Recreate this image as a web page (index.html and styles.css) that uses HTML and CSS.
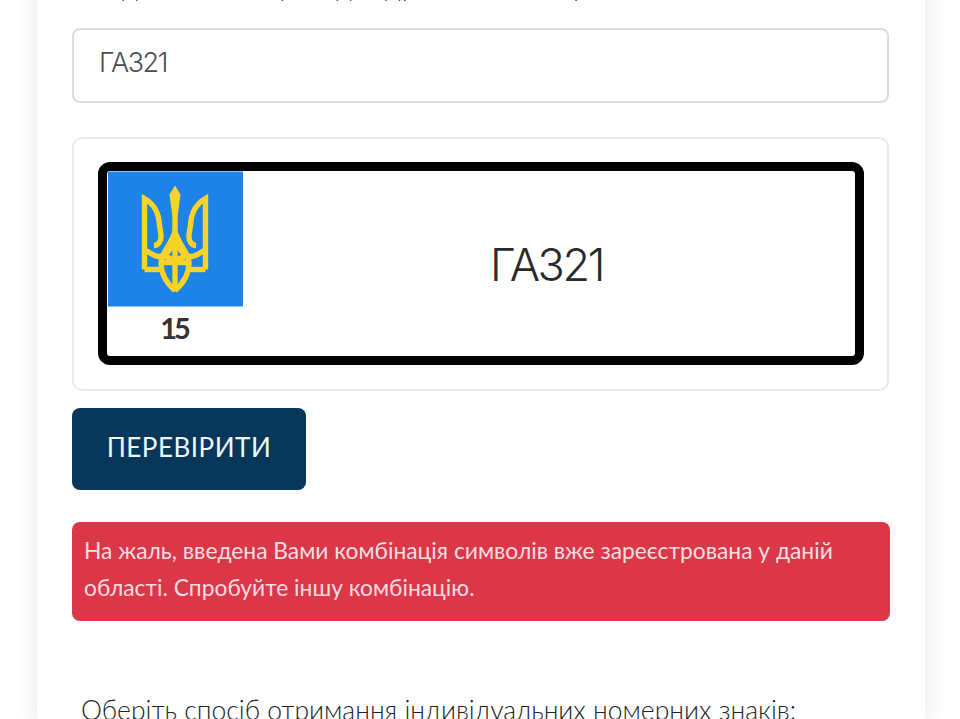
FILE: index.html
```html
<!DOCTYPE html>
<html lang="uk">
<head>
<meta charset="utf-8">
<title>Перевірка номерного знака</title>
<link rel="stylesheet" href="styles.css">
</head>
<body>
<main class="card">
  <p class="intro">Введіть комбінацію індивідуального номерного знака</p>
  <div class="input">ГА321</div>
  <section class="preview">
    <div class="plate">
      <div class="region">
        <svg class="flag" viewBox="0 0 135 135" aria-hidden="true">
          <rect width="135" height="135" fill="#1d83e6"/>
          <g class="tryzub">
            <path class="solid" d="M67 14L72.5 23L70 42L67 52L64 42L61.5 23Z"/>
            <path d="M67 40V120"/>
            <g>
              <path d="M36.5 98V27C47 33 51 42 51.5 54L53 63C53.5 70 50 74 46 74"/>
              <path d="M36.5 79C42 80 45 85 51 85C60 85 65 74 67 60"/>
              <path d="M36.5 98H54"/>
              <path d="M67 60C64 72 53 82 53 91C53 105 60 113 67 119"/>
              <path d="M54 91H67"/>
              <path d="M55 85C60 85 64 87 67 92"/>
            </g>
            <g transform="translate(134 0) scale(-1 1)">
              <path d="M36.5 98V27C47 33 51 42 51.5 54L53 63C53.5 70 50 74 46 74"/>
              <path d="M36.5 79C42 80 45 85 51 85C60 85 65 74 67 60"/>
              <path d="M36.5 98H54"/>
              <path d="M67 60C64 72 53 82 53 91C53 105 60 113 67 119"/>
              <path d="M54 91H67"/>
              <path d="M55 85C60 85 64 87 67 92"/>
            </g>
          </g>
        </svg>
        <span class="code">15</span>
      </div>
      <div class="number">ГА321</div>
    </div>
  </section>
  <button class="check" type="button">ПЕРЕВІРИТИ</button>
  <div class="alert">На жаль, введена Вами комбінація символів вже зареєстрована у даній області. Спробуйте іншу комбінацію.</div>
  <p class="choose">Оберіть спосіб отримання індивідуальних номерних знаків:</p>
</main>
</body>
</html>
```
FILE: styles.css
```css
html, body {
  margin: 0;
  height: 719px;
  overflow: hidden;
  background: #fff;
}
body {
  font-family: Lato, "Open Sans", "Noto Sans", sans-serif;
  color: #212529;
}
.card {
  width: 888px;
  height: 760px;
  margin: -32px 0 0 37px;
  padding: 0 35px;
  box-sizing: border-box;
  background: #fff;
  box-shadow: 0 0 24px rgba(0, 0, 0, .1);
}
.intro {
  margin: 0 0 0 8px;
  height: 60px;
  font-size: 26px;
  font-weight: 300;
  line-height: 36px;
  white-space: nowrap;
}
.input {
  box-sizing: border-box;
  width: 817px;
  height: 75px;
  padding: 0 25px;
  border: 2px solid #dadcde;
  border-radius: 8px;
  font-family: Inter, Roboto, sans-serif;
  font-size: 27px;
  font-weight: 300;
  letter-spacing: -1.4px;
  line-height: 65px;
  color: #495057;
}
.preview {
  box-sizing: border-box;
  width: 817px;
  height: 254px;
  margin-top: 34px;
  padding: 23px 24px;
  border: 2px solid #e9e9ea;
  border-radius: 10px;
}
.plate {
  box-sizing: border-box;
  display: flex;
  width: 766px;
  height: 203px;
  border: 9px solid #000;
  border-radius: 12px;
  background: #fff;
}
.region {
  display: flex;
  flex-direction: column;
  align-items: center;
  width: 135px;
  margin-left: 1px;
  flex: none;
}
.flag {
  display: block;
  width: 135px;
  height: 136px;
}
.tryzub path {
  fill: none;
  stroke: #f5d327;
  stroke-width: 5.4;
}
.tryzub path.solid {
  fill: #f5d327;
  stroke: none;
}
.code {
  padding-right: 3px;
  font-size: 29px;
  font-weight: 700;
  letter-spacing: -3px;
  line-height: 42px;
  color: #333;
}
.number {
  flex: 1;
  display: flex;
  align-items: center;
  justify-content: center;
  padding: 2px 5px 0 0;
  font-family: Inter, Roboto, sans-serif;
  font-size: 45px;
  font-weight: 300;
  letter-spacing: -2.4px;
  color: #2a2a2a;
}
.check {
  display: block;
  width: 234px;
  height: 82px;
  margin-top: 17px;
  padding: 0 0 5px;
  border: 0;
  border-radius: 8px;
  background: #07375a;
  color: #f2f7f7;
  font-family: Lato, "Open Sans", sans-serif;
  font-size: 26px;
  letter-spacing: .5px;
}
.alert {
  box-sizing: border-box;
  width: 818px;
  height: 99px;
  margin-top: 32px;
  padding: 10px 12px;
  border-radius: 8px;
  background: #dc3649;
  color: #f8dde0;
  font-size: 22.8px;
  line-height: 37px;
}
.choose {
  margin: 71px 0 0 9px;
  font-size: 26.5px;
  line-height: 36px;
  font-weight: 300;
  white-space: nowrap;
}
```
